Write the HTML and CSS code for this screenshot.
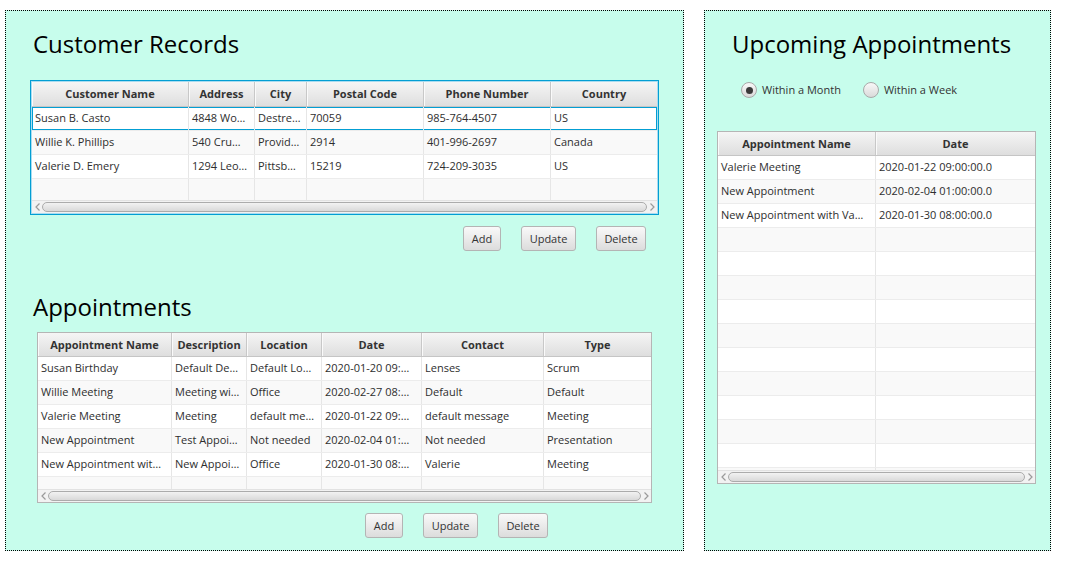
FILE: index.html
```html
<!DOCTYPE html>
<html>
<head>
<meta charset="utf-8">
<link rel="stylesheet" href="styles.css">
</head>
<body>
<div class="panel panel-left">
  <h1 class="title">Customer Records</h1>
  <div class="tv tv-cust focused">
    <div class="tv-head">
      <div class="th">Customer Name</div><div class="th">Address</div><div class="th">City</div><div class="th">Postal Code</div><div class="th">Phone Number</div><div class="th">Country</div>
    </div>
    <div class="tv-body">
      <div class="tr focus-row"><div class="td">Susan B. Casto</div><div class="td">4848 Wo…</div><div class="td">Destre…</div><div class="td">70059</div><div class="td">985-764-4507</div><div class="td">US</div></div>
      <div class="tr"><div class="td">Willie K. Phillips</div><div class="td">540 Cru…</div><div class="td">Provid…</div><div class="td">2914</div><div class="td">401-996-2697</div><div class="td">Canada</div></div>
      <div class="tr"><div class="td">Valerie D. Emery</div><div class="td">1294 Leo…</div><div class="td">Pittsb…</div><div class="td">15219</div><div class="td">724-209-3035</div><div class="td">US</div></div>
      <div class="tr"><div class="td"></div><div class="td"></div><div class="td"></div><div class="td"></div><div class="td"></div><div class="td"></div></div>
    </div>
    <div class="hscroll">
      <span class="arrow"><svg width="5" height="8" viewBox="0 0 5 8"><path d="M4.5 0.5 L1 4 L4.5 7.5" fill="none" stroke="#9a9a9a" stroke-width="1.2"/></svg></span>
      <span class="thumb"></span>
      <span class="arrow"><svg width="5" height="8" viewBox="0 0 5 8"><path d="M0.5 0.5 L4 4 L0.5 7.5" fill="none" stroke="#9a9a9a" stroke-width="1.2"/></svg></span>
    </div>
  </div>
  <div class="btn-row btn-row-cust">
    <button class="btn btn-add">Add</button><button class="btn btn-update">Update</button><button class="btn btn-delete">Delete</button>
  </div>

  <h1 class="title title-appt">Appointments</h1>
  <div class="tv tv-appt">
    <div class="tv-head">
      <div class="th">Appointment Name</div><div class="th">Description</div><div class="th">Location</div><div class="th">Date</div><div class="th">Contact</div><div class="th">Type</div>
    </div>
    <div class="tv-body">
      <div class="tr"><div class="td">Susan Birthday</div><div class="td">Default De…</div><div class="td">Default Lo…</div><div class="td">2020-01-20 09:…</div><div class="td">Lenses</div><div class="td">Scrum</div></div>
      <div class="tr"><div class="td">Willie Meeting</div><div class="td">Meeting wi…</div><div class="td">Office</div><div class="td">2020-02-27 08:…</div><div class="td">Default</div><div class="td">Default</div></div>
      <div class="tr"><div class="td">Valerie Meeting</div><div class="td">Meeting</div><div class="td">default me…</div><div class="td">2020-01-22 09:…</div><div class="td">default message</div><div class="td">Meeting</div></div>
      <div class="tr"><div class="td">New Appointment</div><div class="td">Test Appoi…</div><div class="td">Not needed</div><div class="td">2020-02-04 01:…</div><div class="td">Not needed</div><div class="td">Presentation</div></div>
      <div class="tr"><div class="td">New Appointment wit…</div><div class="td">New Appoi…</div><div class="td">Office</div><div class="td">2020-01-30 08:…</div><div class="td">Valerie</div><div class="td">Meeting</div></div>
      <div class="tr"><div class="td"></div><div class="td"></div><div class="td"></div><div class="td"></div><div class="td"></div><div class="td"></div></div>
    </div>
    <div class="hscroll">
      <span class="arrow"><svg width="5" height="8" viewBox="0 0 5 8"><path d="M4.5 0.5 L1 4 L4.5 7.5" fill="none" stroke="#9a9a9a" stroke-width="1.2"/></svg></span>
      <span class="thumb"></span>
      <span class="arrow"><svg width="5" height="8" viewBox="0 0 5 8"><path d="M0.5 0.5 L4 4 L0.5 7.5" fill="none" stroke="#9a9a9a" stroke-width="1.2"/></svg></span>
    </div>
  </div>
  <div class="btn-row btn-row-appt">
    <button class="btn btn-add">Add</button><button class="btn btn-update">Update</button><button class="btn btn-delete">Delete</button>
  </div>
</div>

<div class="panel panel-right">
  <h1 class="title">Upcoming Appointments</h1>
  <div class="radio-row">
    <label class="radio-item"><span class="radio selected"><span class="dot"></span></span><span class="radio-label">Within a Month</span></label>
    <label class="radio-item"><span class="radio"></span><span class="radio-label">Within a Week</span></label>
  </div>
  <div class="tv tv-up">
    <div class="tv-head">
      <div class="th">Appointment Name</div><div class="th">Date</div>
    </div>
    <div class="tv-body">
      <div class="tr"><div class="td">Valerie Meeting</div><div class="td">2020-01-22 09:00:00.0</div></div>
      <div class="tr"><div class="td">New Appointment</div><div class="td">2020-02-04 01:00:00.0</div></div>
      <div class="tr"><div class="td">New Appointment with Va…</div><div class="td">2020-01-30 08:00:00.0</div></div>
      <div class="tr"><div class="td"></div><div class="td"></div></div>
      <div class="tr"><div class="td"></div><div class="td"></div></div>
      <div class="tr"><div class="td"></div><div class="td"></div></div>
      <div class="tr"><div class="td"></div><div class="td"></div></div>
      <div class="tr"><div class="td"></div><div class="td"></div></div>
      <div class="tr"><div class="td"></div><div class="td"></div></div>
      <div class="tr"><div class="td"></div><div class="td"></div></div>
      <div class="tr"><div class="td"></div><div class="td"></div></div>
      <div class="tr"><div class="td"></div><div class="td"></div></div>
      <div class="tr"><div class="td"></div><div class="td"></div></div>
      <div class="tr"><div class="td"></div><div class="td"></div></div>
    </div>
    <div class="hscroll">
      <span class="arrow"><svg width="5" height="8" viewBox="0 0 5 8"><path d="M4.5 0.5 L1 4 L4.5 7.5" fill="none" stroke="#9a9a9a" stroke-width="1.2"/></svg></span>
      <span class="thumb"></span>
      <span class="arrow"><svg width="5" height="8" viewBox="0 0 5 8"><path d="M0.5 0.5 L4 4 L0.5 7.5" fill="none" stroke="#9a9a9a" stroke-width="1.2"/></svg></span>
    </div>
  </div>
</div>
</body>
</html>
```
FILE: styles.css
```css
html, body {
  margin: 0;
  background: #ffffff;
}
body {
  padding: 10px 0 0 5px;
  display: flex;
  align-items: flex-start;
  gap: 20px;
  font-family: "Open Sans", "Noto Sans", sans-serif;
  font-size: 11px;
  color: #2e2e2e;
}
.panel {
  box-sizing: border-box;
  height: 541px;
  border: 1px dotted #000000;
  background: #c7fdec;
  display: flex;
  flex-direction: column;
  align-items: flex-start;
  padding-top: 17px;
}
.panel-left { width: 679px; }
.panel-right { width: 347px; }

.title {
  margin: 0 0 0 27px;
  height: 32px;
  font-size: 24px;
  line-height: 32px;
  font-weight: 400;
  color: #000000;
  white-space: nowrap;
}
.title-appt { margin-top: 40px; }

/* table view */
.tv {
  box-sizing: border-box;
  border: 1px solid #b5b5b5;
  background: #ffffff;
  display: flex;
  flex-direction: column;
  overflow: hidden;
}
.tv.focused {
  border-color: #039ed3;
  padding: 1px;
  background: #a9dcf0;
}
.tv-cust { width: 629px; height: 135px; margin: 20px 0 0 24px; }
.tv-appt { width: 615px; height: 171px; margin: 9px 0 0 31px; }
.tv-up { width: 319px; height: 353px; margin: 33px 0 0 12px; }

.tv-head, .tr {
  display: grid;
}
.tv-cust .tv-head, .tv-cust .tr { grid-template-columns: 157px 66px 52px 117px 127px 106px; }
.tv-appt .tv-head, .tv-appt .tr { grid-template-columns: 134px 75px 75px 100px 122px 107px; }
.tv-up .tv-head, .tv-up .tr { grid-template-columns: 158px 159px; }

.tv-head {
  box-sizing: border-box;
  height: 24px;
  flex: none;
  background: linear-gradient(to bottom, #f5f5f5, #dedede);
  border-bottom: 1px solid #c5c5c5;
}
.tv-cust .tv-head { height: 25px; }
.th {
  box-sizing: border-box;
  border-right: 1px solid #c8c8c8;
  box-shadow: inset 1px 0 0 #fafafa;
  text-align: center;
  font-weight: 700;
  line-height: 23px;
  color: #333333;
  white-space: nowrap;
  overflow: hidden;
}
.th:last-child { border-right: none; }

.tv-body {
  flex: 1;
  overflow: hidden;
  background: #ffffff;
}
.tr {
  box-sizing: border-box;
  height: 24px;
  border-bottom: 1px solid #ececec;
  background: #ffffff;
}
.tr:nth-child(even) { background: #f9f9f9; }
.tr.focus-row { box-shadow: inset 0 0 0 1px #039ed3; }
.td {
  box-sizing: border-box;
  border-right: 1px solid #e6e6e6;
  padding: 0 3px;
  line-height: 22px;
  white-space: nowrap;
  overflow: hidden;
  text-overflow: ellipsis;
  color: #2e2e2e;
}
.td:last-child { border-right: none; }

/* horizontal scrollbar */
.hscroll {
  flex: none;
  height: 13px;
  box-sizing: border-box;
  display: flex;
  align-items: center;
  background: #f2f2f2;
  border-top: 1px solid #e2e2e2;
}
.arrow {
  width: 10px;
  height: 12px;
  display: flex;
  align-items: center;
  justify-content: center;
  flex: none;
}
.thumb {
  flex: 1;
  box-sizing: border-box;
  height: 10px;
  border: 1px solid #ababab;
  border-radius: 5px;
  background: linear-gradient(to bottom, #f2f2f2, #d9d9d9);
}

/* buttons */
.btn-row {
  display: flex;
  gap: 20px;
  margin-top: 11px;
}
.btn-row-cust { align-self: flex-end; margin-right: 37px; }
.btn-row-appt { margin-top: 10px; margin-left: 359px; }
.btn {
  box-sizing: border-box;
  height: 25px;
  padding: 0;
  border: 1px solid #b4b4b4;
  border-radius: 3px;
  background: linear-gradient(to bottom, #f9f9f9, #dcdcdc);
  font-family: "Open Sans", "Noto Sans", sans-serif;
  font-size: 11px;
  color: #333333;
  text-align: center;
}
.btn-add { width: 38px; }
.btn-update { width: 55px; }
.btn-delete { width: 50px; }

/* radios */
.radio-row {
  display: flex;
  gap: 22px;
  margin: 22px 0 0 36px;
  height: 16px;
}
.radio-item {
  display: flex;
  align-items: center;
  gap: 5px;
}
.radio {
  box-sizing: border-box;
  width: 16px;
  height: 16px;
  border: 1px solid #a9a9a9;
  border-radius: 50%;
  background: linear-gradient(to bottom, #f8f8f8, #dadada);
  display: flex;
  align-items: center;
  justify-content: center;
}
.dot {
  width: 7px;
  height: 7px;
  border-radius: 50%;
  background: #3a3a3a;
}
.radio-label {
  line-height: 16px;
  color: #333333;
}
```
